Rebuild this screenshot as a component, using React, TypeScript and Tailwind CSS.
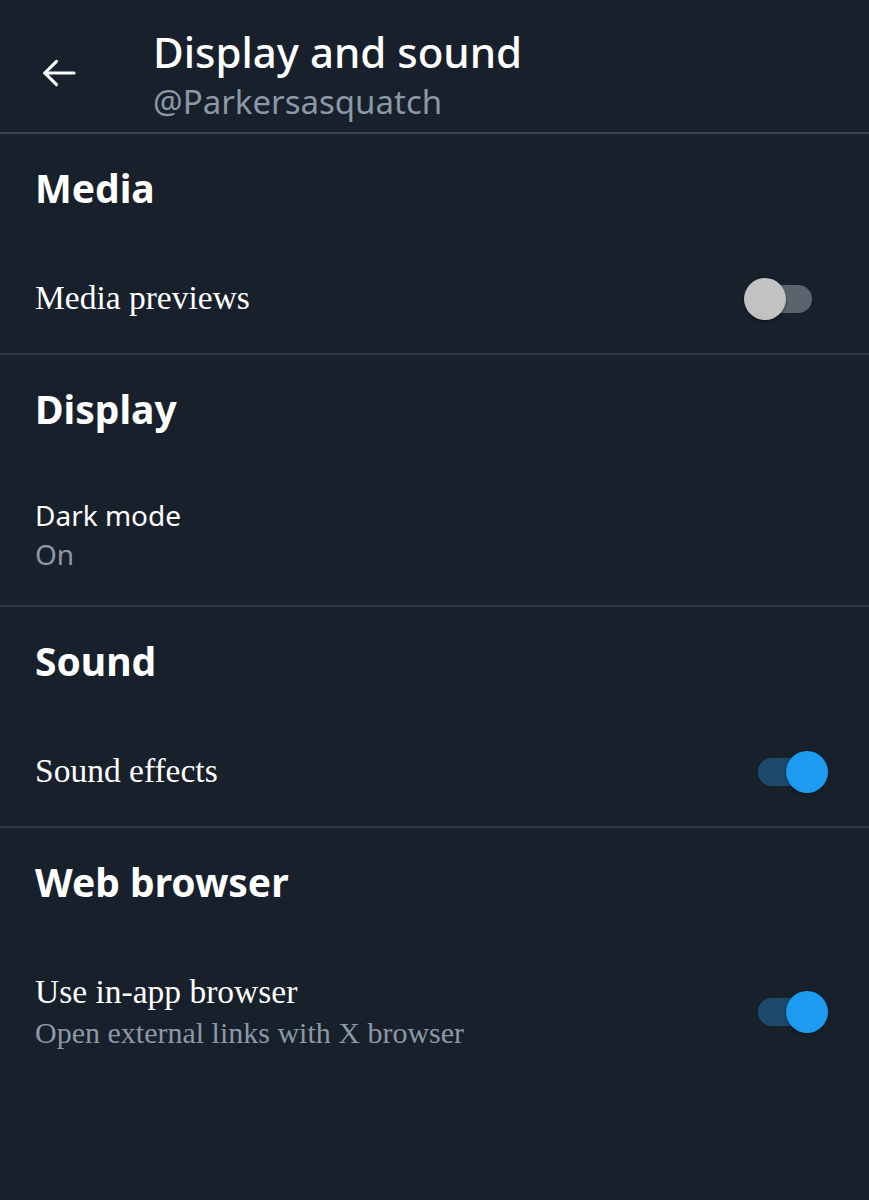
import React from "react";

const sans = { fontFamily: "'Noto Sans', Roboto, sans-serif" };
const serif = { fontFamily: "'Liberation Serif', 'DejaVu Serif', serif" };

function Toggle({ on }: { on: boolean }) {
  return (
    <div className="relative w-[54px] h-[28px] mr-[57px]">
      <div className={`absolute inset-0 rounded-full ${on ? "bg-[#1c4a6b]" : "bg-[#5b636c]"}`} />
      <div
        className={`absolute top-1/2 -translate-y-1/2 w-[42px] h-[42px] rounded-full shadow-[0_1px_3px_rgba(0,0,0,0.5)] ${
          on ? "left-[28px] bg-[#1d9bf0]" : "left-[-14px] bg-[#c2c2c2]"
        }`}
      />
    </div>
  );
}

function Heading({ children }: { children: React.ReactNode }) {
  return (
    <div className="h-[110px] flex items-center px-[35px] pb-[3px]">
      <span className="text-[39px] font-bold text-white leading-none" style={sans}>
        {children}
      </span>
    </div>
  );
}

function Divider() {
  return <div className="h-[2px] bg-[#2d3843]" />;
}

export default function App() {
  return (
    <div className="w-[869px] h-[1200px] bg-[#17202b] overflow-hidden">
      <div className="h-[132px] flex">
        <div className="w-[153px] flex items-start pl-[39px] pt-[53px]">
          <svg width="40" height="40" viewBox="0 0 24 24" fill="none" stroke="white" strokeWidth="1.9" strokeLinecap="round" strokeLinejoin="round">
            <path d="M21 12H3.5" />
            <path d="M10.5 5l-7 7 7 7" />
          </svg>
        </div>
        <div className="flex flex-col pt-[24px]" style={sans}>
          <span className="text-[42px] font-medium text-white leading-[56px]">Display and sound</span>
          <span className="text-[33px] text-[#8b98a5] leading-[44px]">@Parkersasquatch</span>
        </div>
      </div>
      <div className="h-[2px] bg-[#3a4550]" />

      <Heading>Media</Heading>
      <div className="h-[109px] flex items-center justify-between pl-[35px]">
        <span className="text-[33.5px] text-white" style={serif}>Media previews</span>
        <Toggle on={false} />
      </div>
      <Divider />

      <Heading>Display</Heading>
      <div className="h-[140px] flex flex-col justify-center px-[35px]" style={sans}>
        <span className="text-[28px] text-white leading-[39px]">Dark mode</span>
        <span className="text-[28px] text-[#8b98a5] leading-[39px]">On</span>
      </div>
      <Divider />

      <Heading>Sound</Heading>
      <div className="h-[109px] flex items-center justify-between pl-[35px]">
        <span className="text-[33.5px] text-white" style={serif}>Sound effects</span>
        <Toggle on={true} />
      </div>
      <Divider />

      <Heading>Web browser</Heading>
      <div className="h-[148px] flex items-center justify-between pl-[35px]">
        <div className="flex flex-col" style={serif}>
          <span className="text-[33.5px] text-white leading-[42px]">Use in-app browser</span>
          <span className="text-[30px] text-[#8b98a5] leading-[40px]">Open external links with X browser</span>
        </div>
        <Toggle on={true} />
      </div>
    </div>
  );
}
